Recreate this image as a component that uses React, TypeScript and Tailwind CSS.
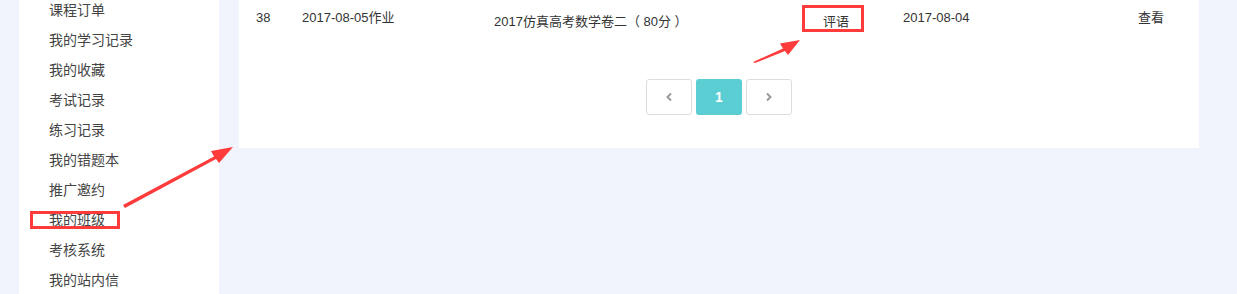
import React from 'react';

const menu = ['课程订单', '我的学习记录', '我的收藏', '考试记录', '练习记录', '我的错题本', '推广邀约', '我的班级', '考核系统', '我的站内信'];

const font = { fontFamily: '"Liberation Sans", "Noto Sans CJK SC", sans-serif' };

const App: React.FC = () => {
  return (
    <div className="relative w-[1237px] h-[294px] overflow-hidden bg-[#f1f4fc] flex text-[#333]" style={font}>
      {/* Sidebar */}
      <div className="ml-[19px] w-[200px] h-full bg-white">
        <ul className="-mt-[5px] pl-[30px]">
          {menu.map(item => (
            <li key={item} className="relative h-[30px] leading-[30px] text-[14px] text-[#444]">
              {item === '我的班级' && (
                <span className="absolute left-[-19px] top-[6px] w-[90px] h-[18px] border-[3px] border-[#ff3b3b]" />
              )}
              {item}
            </li>
          ))}
        </ul>
      </div>

      {/* Main panel */}
      <div className="ml-[20px] w-[960px] h-[148px] bg-white">
        <div className="flex text-[13px] leading-[16px] pt-[10px]">
          <div className="w-[63px] pl-[17px]">38</div>
          <div className="w-[192px]">2017-08-05作业</div>
          <div className="w-[308px] pt-[4px]">2017仿真高考数学卷二（ 80分 ）</div>
          <div className="w-[101px] pt-[4px] relative">
            <span className="absolute left-[0px] top-[-5px] w-[62px] h-[27px] border-[3px] border-[#ff3b3b]" />
            <span className="pl-[21px]">评语</span>
          </div>
          <div className="w-[235px]">2017-08-04</div>
          <div>查看</div>
        </div>

        <div className="flex justify-center gap-[4px] mt-[49px]">
          <button className="w-[46px] h-[36px] rounded-[3px] border border-[#dddddd] bg-white flex items-center justify-center">
            <svg width="8" height="10" viewBox="0 0 8 10"><path d="M6 1.5 L2.5 5 L6 8.5" fill="none" stroke="#999" strokeWidth="2" /></svg>
          </button>
          <button className="w-[46px] h-[36px] rounded-[3px] bg-[#5bced3] text-white text-[14px] font-bold flex items-center justify-center">1</button>
          <button className="w-[46px] h-[36px] rounded-[3px] border border-[#dddddd] bg-white flex items-center justify-center">
            <svg width="8" height="10" viewBox="0 0 8 10"><path d="M2 1.5 L5.5 5 L2 8.5" fill="none" stroke="#999" strokeWidth="2" /></svg>
          </button>
        </div>
      </div>

      {/* Annotation arrows */}
      <svg className="absolute left-0 top-0 pointer-events-none" width="1237" height="294">
        <polygon points="123,205 214,156.5 211,151 233,147 219,163 216,159 125,208" fill="#ff3b3b" />
        <polygon points="753,62 783,48.5 780,43.5 800,40 788,55 785,51 755,63" fill="#ff3b3b" />
      </svg>
    </div>
  );
};

export default App;
